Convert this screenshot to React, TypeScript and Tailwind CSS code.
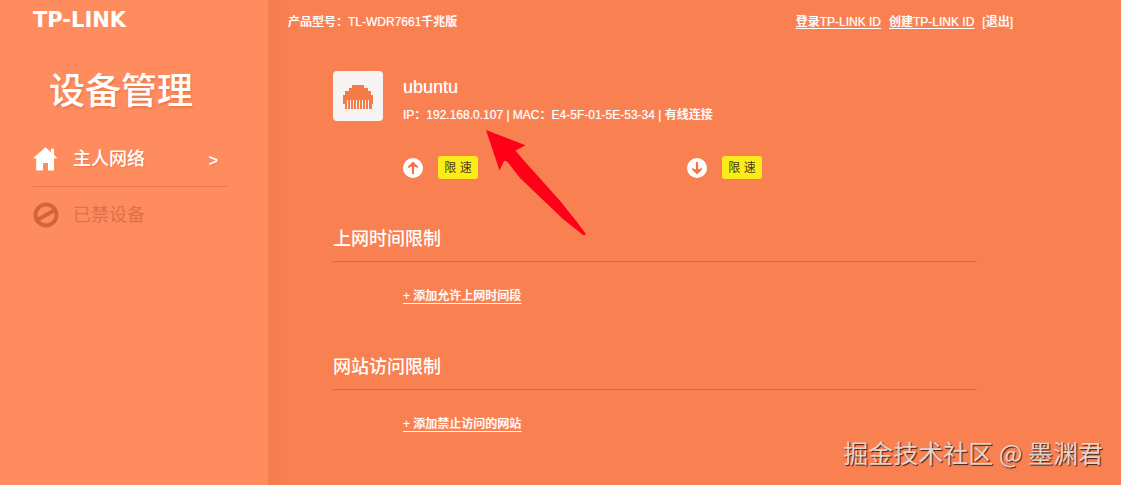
import React from 'react';

type IconProps = { className?: string };

const HomeIcon = ({ className }: IconProps) => (
  <svg viewBox="0 0 24 24" fill="currentColor" className={className} aria-hidden="true">
    <path d="M12.5 0.3 L18 5.2 V1.8 H21 V7.8 L24.3 11.3 H21 V23.5 H15 V16 H10 V23.5 H3.2 V11.3 H0 Z" />
  </svg>
);

const BannedIcon = ({ className }: IconProps) => (
  <svg viewBox="0 0 26 26" fill="none" stroke="currentColor" strokeWidth="4" className={className} aria-hidden="true">
    <circle cx="13" cy="13" r="10.5" />
    <path d="M5 17.5 L21 8.5" />
  </svg>
);

const WiredIcon = ({ className }: IconProps) => (
  <svg viewBox="0 0 30 24" fill="currentColor" shapeRendering="crispEdges" className={className} aria-hidden="true">
    <path d="M9 0 H21 V3 H25 V6 H28 V10 H30 V19 H29 V24 H26 V15 H25 V24 H23 V15 H22 V24 H20 V15 H19 V24 H17 V15 H16 V24 H14 V15 H13 V24 H11 V15 H10 V24 H8 V15 H7 V24 H5 V15 H4 V24 H2 V19 H0 V10 H2 V6 H6 V3 H9 Z" />
  </svg>
);

const UploadIcon = ({ className }: IconProps) => (
  <svg viewBox="0 0 20 20" className={className} role="img" aria-label="上传">
    <circle cx="10" cy="10" r="10" fill="#fff" />
    <path d="M10 3.6 L15 8.6 V10 L11.1 8.6 V16 H8.9 V8.6 L5 10 V8.6 Z" fill="#f4743f" />
  </svg>
);

const DownloadIcon = ({ className }: IconProps) => (
  <svg viewBox="0 0 20 20" className={className} role="img" aria-label="下载">
    <circle cx="10" cy="10" r="10" fill="#fff" />
    <path d="M10 16.4 L5 11.4 V10 L8.9 11.4 V4 H11.1 V11.4 L15 10 V11.4 Z" fill="#f4743f" />
  </svg>
);

const Sidebar = () => (
  <aside className="w-67 shrink-0 bg-[#ff8c5f] pl-[33px] pr-10">
    <div className="pt-2 font-['DejaVu_Sans'] text-[21px] leading-6 font-bold">TP-LINK</div>
    <h1 className="mt-[34px] pl-4 text-4xl leading-13 font-medium whitespace-nowrap [text-shadow:1px_2px_2px_#d9683c80]">
      设备管理
    </h1>
    <nav className="mt-[13px] text-lg">
      <a href="#host" className="flex h-14 items-center gap-4 border-b border-[#ef7548] font-medium [text-shadow:1px_1px_1px_#d9683c80]">
        <HomeIcon className="size-6" />
        主人网络
        <span className="ml-auto pr-2.5 pt-1 text-base font-bold">&gt;</span>
      </a>
      <a href="#banned" className="flex h-14 items-center gap-4 text-[#dd7048]">
        <BannedIcon className="size-[26px] -mr-0.5 text-[#d2653a]" />
        已禁设备
      </a>
    </nav>
  </aside>
);

const RateLimit = ({ icon }: { icon: React.ReactNode }) => (
  <div className="flex w-71 items-center gap-[15px]">
    {icon}
    <button type="button" className="h-[23px] w-10 rounded-[3px] bg-[#fbec19] text-xs text-[#4a3a10]">
      限 速
    </button>
  </div>
);

const LimitSection = ({ title, action }: { title: string; action: string }) => (
  <section>
    <h3 className="border-b border-[#e0653c] pb-2 text-lg leading-7 font-medium">{title}</h3>
    <div className="mt-6 pl-[70px] text-xs leading-5 font-medium [text-shadow:0_0_1px_#ffffff99]">
      <a href="#add" className="underline underline-offset-3">+ {action}</a>
    </div>
  </section>
);

const DeviceInfo = () => (
  <section className="relative">
    <div className="flex gap-5">
      <div className="flex size-[50px] shrink-0 items-center justify-center rounded-[4px] bg-[#f7f3f2] pt-0.5">
        <WiredIcon className="h-6 w-[30px] text-[#f47a48]" />
      </div>
      <div className="whitespace-nowrap">
        <h2 className="pt-1 text-lg leading-6 [text-shadow:0_0_1px_#ffffff99]">ubuntu</h2>
        <p className="pt-1 text-xs leading-6 font-medium [text-shadow:0_0_1px_#ffffff99]">
          IP：192.168.0.107 | MAC：E4-5F-01-5E-53-34 | 有线连接
        </p>
      </div>
    </div>
    <div className="mt-[29px] flex pl-[70px]">
      <RateLimit icon={<UploadIcon className="size-5" />} />
      <RateLimit icon={<DownloadIcon className="size-5" />} />
    </div>
    {/* pointer to the device address */}
    <svg viewBox="0 0 100 106" fill="#ff0019" className="absolute left-[153px] top-[59px] h-[106px] w-[100px]" aria-hidden="true">
      <path d="M0 0 L39.5 15.2 L29.5 20.5 Q38 31 51 45 L75 72 L91 92 L99.5 103.5 Q99.8 106 97 105 L77 89 L56 69 L34 48 L22 32.5 Q19 30 18 31 L13.5 40.5 Z" />
    </svg>
  </section>
);

export default function App() {
  return (
    <div className="relative flex min-h-screen bg-[#f98051] font-['Liberation_Sans','Noto_Sans_CJK_SC',sans-serif] text-white">
      <Sidebar />
      <main className="min-w-0 flex-1 bg-linear-to-r from-[#f47c4d] to-[#f98051] to-3% pb-10">
        <header className="flex h-11 items-center justify-between pl-5 pr-27 text-xs font-medium [text-shadow:0_0_1px_#ffffff99]">
          <span>产品型号：TL-WDR7661千兆版</span>
          <div className="flex gap-2">
            <a href="#login" className="underline underline-offset-2">登录TP-LINK ID</a>
            <a href="#create" className="underline underline-offset-2">创建TP-LINK ID</a>
            <a href="#logout">[退出]</a>
          </div>
        </header>
        <div className="pt-[27px] pl-[65px] pr-36">
          <DeviceInfo />
          <div className="mt-[46px] flex flex-col gap-[47px]">
            <LimitSection title="上网时间限制" action="添加允许上网时间段" />
            <LimitSection title="网站访问限制" action="添加禁止访问的网站" />
          </div>
        </div>
      </main>
      <div className="absolute right-[18px] bottom-[15px] text-[25px] leading-9 font-['Noto_Sans_CJK_SC',sans-serif] text-[#e6d3cc] [text-shadow:1px_1px_1px_#3a2018]">
        掘金技术社区 @ 墨渊君
      </div>
    </div>
  );
}
